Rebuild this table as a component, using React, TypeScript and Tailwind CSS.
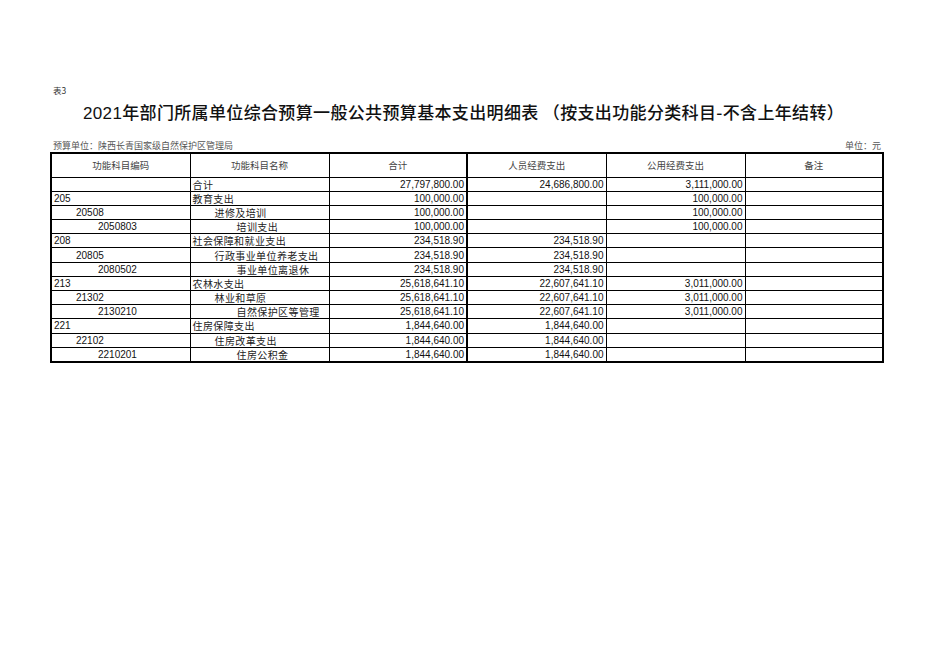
type Row = {
  code: string;
  name: string;
  level: number;
  total: string;
  staff: string;
  public: string;
};

const rows: Row[] = [
  { code: '', name: '合计', level: 0, total: '27,797,800.00', staff: '24,686,800.00', public: '3,111,000.00' },
  { code: '205', name: '教育支出', level: 0, total: '100,000.00', staff: '', public: '100,000.00' },
  { code: '20508', name: '进修及培训', level: 1, total: '100,000.00', staff: '', public: '100,000.00' },
  { code: '2050803', name: '培训支出', level: 2, total: '100,000.00', staff: '', public: '100,000.00' },
  { code: '208', name: '社会保障和就业支出', level: 0, total: '234,518.90', staff: '234,518.90', public: '' },
  { code: '20805', name: '行政事业单位养老支出', level: 1, total: '234,518.90', staff: '234,518.90', public: '' },
  { code: '2080502', name: '事业单位离退休', level: 2, total: '234,518.90', staff: '234,518.90', public: '' },
  { code: '213', name: '农林水支出', level: 0, total: '25,618,641.10', staff: '22,607,641.10', public: '3,011,000.00' },
  { code: '21302', name: '林业和草原', level: 1, total: '25,618,641.10', staff: '22,607,641.10', public: '3,011,000.00' },
  { code: '2130210', name: '自然保护区等管理', level: 2, total: '25,618,641.10', staff: '22,607,641.10', public: '3,011,000.00' },
  { code: '221', name: '住房保障支出', level: 0, total: '1,844,640.00', staff: '1,844,640.00', public: '' },
  { code: '22102', name: '住房改革支出', level: 1, total: '1,844,640.00', staff: '1,844,640.00', public: '' },
  { code: '2210201', name: '住房公积金', level: 2, total: '1,844,640.00', staff: '1,844,640.00', public: '' },
];

// 缩进：每级约 22px
const pad = ['pl-[2px]', 'pl-[24px]', 'pl-[46px]'];

const cjk = "font-['Noto_Sans_CJK_SC',sans-serif]";
const num = "font-['Liberation_Sans',Arial,sans-serif]";

export default function App() {
  return (
    <div className={`w-[936px] h-[662px] bg-white text-black ${cjk}`}>
      <div className="pt-[84px] pl-[53px] h-[96px] text-[8.5px] leading-[12px] text-[#333]">表3</div>

      <h1 className="mt-[4px] h-[24px] pl-[83px] text-[17px] tracking-[0.35px] leading-[24px] font-medium whitespace-nowrap text-[#111]">
        <span className={num}>2021</span>年部门所属单位综合预算一般公共预算基本支出明细表 （按支出功能分类科目-不含上年结转）
      </h1>

      <div className="mt-[16px] h-[12px] pl-[53px] pr-[55px] flex justify-between text-[9px] leading-[12px] text-[#555]">
        <span>预算单位：陕西长青国家级自然保护区管理局</span>
        <span>单位：元</span>
      </div>

      <table className="mt-[0px] ml-[50px] w-[833px] table-fixed border-collapse border-2 border-black">
        <colgroup>
          <col className="w-[139px]" />
          <col className="w-[139px]" />
          <col className="w-[138px]" />
          <col className="w-[139px]" />
          <col className="w-[139px]" />
          <col className="w-[138px]" />
        </colgroup>
        <thead>
          <tr className="h-[24px] text-[9.5px] leading-[12px] text-[#444]">
            <th className="border border-black p-0 font-normal">功能科目编码</th>
            <th className="border border-black p-0 font-normal">功能科目名称</th>
            <th className="border border-black border-r-2 p-0 font-normal">合计</th>
            <th className="border border-black p-0 font-normal">人员经费支出</th>
            <th className="border border-black p-0 font-normal">公用经费支出</th>
            <th className="border border-black p-0 font-normal">备注</th>
          </tr>
        </thead>
        <tbody>
          {rows.map((r, i) => (
            <tr key={i} className="h-[14.2px] leading-[13px]">
              <td className={`border border-black p-0 ${pad[r.level]} text-[10px] ${num} text-[#111] whitespace-nowrap`}>{r.code}</td>
              <td className={`border border-black p-0 ${pad[r.level]} text-[10px] tracking-[0.4px] text-[#222] whitespace-nowrap`}>{r.name}</td>
              <td className={`border border-black border-r-2 p-0 pr-[2px] text-right text-[10px] ${num} text-[#111]`}>{r.total}</td>
              <td className={`border border-black p-0 pr-[2px] text-right text-[10px] ${num} text-[#111]`}>{r.staff}</td>
              <td className={`border border-black p-0 pr-[2px] text-right text-[10px] ${num} text-[#111]`}>{r.public}</td>
              <td className="border border-black p-0"></td>
            </tr>
          ))}
        </tbody>
      </table>
    </div>
  );
}
